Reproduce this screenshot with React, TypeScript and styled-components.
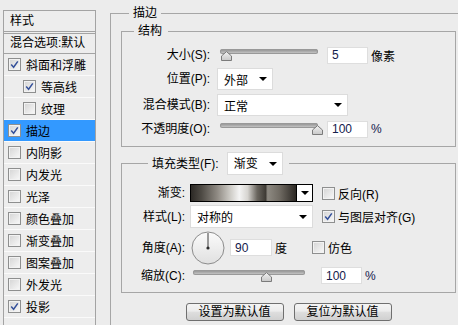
import React from "react";
import styled, { createGlobalStyle } from "styled-components";

const GlobalStyle = createGlobalStyle`
  html, body {
    margin: 0;
    padding: 0;
    background: #ececec;
  }
  body {
    font-family: "Liberation Sans", "Noto Sans CJK SC", sans-serif;
    font-size: 12px;
    color: #000;
    overflow: hidden;
  }
`;

const effects = [
  { label: "斜面和浮雕", checked: true },
  { label: "等高线", checked: true, indent: true },
  { label: "纹理", indent: true },
  { label: "描边", checked: true, active: true },
  { label: "内阴影" },
  { label: "内发光" },
  { label: "光泽" },
  { label: "颜色叠加" },
  { label: "渐变叠加" },
  { label: "图案叠加" },
  { label: "外发光" },
  { label: "投影", checked: true },
];

const Window = styled.div`
  display: flex;
  align-items: flex-start;
  width: 458px;
  height: 325px;
  overflow: hidden;
  background: #ececec;
`;

const Sidebar = styled.div`
  box-sizing: border-box;
  flex-shrink: 0;
  width: 93px;
  height: 330px;
  margin: 10px 0 0 3px;
  border: 1px solid #a3a3a3;
  background: #ededed;
`;

const SidebarHeader = styled.div`
  height: 20px;
  line-height: 20px;
  padding-left: 6px;
  border-bottom: 3px double #a3a3a3;
`;

const BlendRow = styled.div`
  height: 19px;
  line-height: 19px;
  padding-left: 6px;
  border-bottom: 1px solid #a3a3a3;
  white-space: nowrap;
`;

const EffectRow = styled.div<{ $active?: boolean; $indent?: boolean }>`
  display: flex;
  align-items: center;
  gap: 5px;
  height: 21px;
  padding-left: ${(p) => (p.$indent ? 19 : 4)}px;
  border-bottom: 1px solid #fafafa;
  background: ${(p) => (p.$active ? "#3399ff" : "transparent")};
  white-space: nowrap;
`;

const CheckFrame = styled.span`
  box-sizing: border-box;
  flex-shrink: 0;
  display: flex;
  align-items: center;
  justify-content: center;
  width: 13px;
  height: 13px;
  border: 1px solid #8e8f8f;
  background: linear-gradient(135deg, #d4d4d4, #f9f9f9);
  box-shadow: inset 0 0 0 1px #f2f2f2;
`;

function CheckBox({ checked }: { checked?: boolean }) {
  return (
    <CheckFrame>
      {checked && (
        <svg width="9" height="9" viewBox="0 0 9 9">
          <path d="M1.2 4.6 L3.6 7.2 L7.8 1.4" fill="none" stroke="#34509a" strokeWidth="1.5" />
        </svg>
      )}
    </CheckFrame>
  );
}

const Main = styled.div`
  flex-shrink: 0;
  margin: 5px 0 0 14px;
`;

const Group = styled.fieldset`
  box-sizing: border-box;
  width: 360px;
  height: 340px;
  min-width: 0;
  margin: 0;
  padding: 0 0 0 10px;
  border: 1px solid #a6a6a6;
`;

const GroupTitle = styled.legend`
  margin-left: 8px;
  padding: 0 4px;
  line-height: 16px;
`;

const Section = styled.fieldset`
  box-sizing: border-box;
  width: 335px;
  min-width: 0;
  margin: 2px 0 0;
  padding: 0;
  border: 1px solid #a6a6a6;

  & + & {
    margin-top: 5px;
  }
`;

const SectionTitle = styled.legend<{ $offset: number }>`
  margin-left: ${(p) => p.$offset}px;
  padding: 0 6px 0 4px;
  line-height: 16px;
`;

const LegendRow = styled.span`
  display: flex;
  align-items: center;
  gap: 8px;
`;

const StructureGrid = styled.div`
  display: grid;
  grid-template-columns: 88px 1fr;
  grid-template-rows: 18px 22px 22px 18px;
  column-gap: 7px;
  row-gap: 4px;
  align-items: center;
  padding: 7px 0 8px;
`;

const FillGrid = styled.div`
  display: grid;
  grid-template-columns: 63px 123px 1fr;
  grid-template-rows: 18px 23px 33px 17px;
  column-gap: 5px;
  row-gap: 3px;
  align-items: center;
  padding: 9px 0 8px;
`;

const Label = styled.span`
  text-align: right;
  white-space: nowrap;
  line-height: 16px;
`;

const Controls = styled.div<{ $span?: boolean }>`
  display: flex;
  align-items: center;
  height: 100%;
  grid-column: ${(p) => (p.$span ? "2 / 4" : "auto")};
`;

const SelectBox = styled.div<{ $w: number; $h?: number }>`
  box-sizing: border-box;
  display: flex;
  align-items: center;
  justify-content: space-between;
  width: ${(p) => p.$w}px;
  height: ${(p) => p.$h ?? 22}px;
  padding: 0 5px 0 6px;
  background: #fff;
  border: 1px solid #dcdcdc;
  white-space: nowrap;
`;

const Caret = styled.span`
  width: 0;
  height: 0;
  border-left: 4px solid transparent;
  border-right: 4px solid transparent;
  border-top: 4px solid #000;
`;

const NumberField = styled.input<{ $w: number; $gap: number }>`
  box-sizing: border-box;
  flex-shrink: 0;
  width: ${(p) => p.$w}px;
  height: 17px;
  margin: 0 3px 0 ${(p) => p.$gap}px;
  padding: 0 0 0 4px;
  background: #fff;
  border: 1px solid #dedede;
  outline: none;
  font-family: "Liberation Sans", sans-serif;
  font-size: 12px;
  color: #14204c;
`;

const Unit = styled.span<{ $latin?: boolean }>`
  white-space: nowrap;
  color: ${(p) => (p.$latin ? "#14204c" : "#000")};
`;

const SliderWrap = styled.div<{ $w: number }>`
  position: relative;
  flex-shrink: 0;
  width: ${(p) => p.$w}px;
  height: 16px;
  margin-left: 3px;
`;

const Track = styled.div`
  margin-top: 2px;
  height: 5px;
  border-radius: 3px;
  background: linear-gradient(#8a8a8a, #b4b4b4 60%, #d2d2d2);
  box-shadow: inset 0 0 0 1px #999;
`;

const Thumb = styled.svg`
  position: absolute;
  top: 4px;
`;

function Slider({ width, value, min, max }: { width: number; value: number; min: number; max: number }) {
  const left = -1 + ((value - min) / (max - min)) * (width - 5);
  return (
    <SliderWrap $w={width}>
      <Track />
      <Thumb width="11" height="10" viewBox="0 0 11 10" style={{ left }}>
        <defs>
          <linearGradient id={`tg${width}${value}`} x1="0" y1="0" x2="0" y2="1">
            <stop offset="0" stopColor="#f2f2f2" />
            <stop offset="1" stopColor="#c8c8c8" />
          </linearGradient>
        </defs>
        <path d="M0.5 9.5 V5 L5.5 0.6 L10.5 5 V9.5 Z" fill={`url(#tg${width}${value})`} stroke="#7b7b7b" />
      </Thumb>
    </SliderWrap>
  );
}

const GradientPicker = styled.div`
  box-sizing: border-box;
  display: flex;
  width: 123px;
  height: 18px;
  border: 1px solid #000;
  background: #fff;
`;

const GradientSwatch = styled.div`
  flex: 1;
  background: linear-gradient(
    90deg,
    #2c2925 0%,
    #4e4a44 10%,
    #8f8a83 25%,
    #d0cec9 38%,
    #f4f4f4 46%,
    #d6d4d0 54%,
    #6a665f 63%,
    #3f3b35 71%,
    #8e8a82 73%,
    #716c64 84%,
    #2c2824 100%
  );
`;

const GradientCaret = styled.div`
  display: flex;
  align-items: center;
  justify-content: center;
  width: 15px;
  border-left: 1px solid #000;
`;

const OptionCheck = styled.label<{ $gap: number }>`
  display: flex;
  align-items: center;
  gap: 3px;
  margin-left: ${(p) => p.$gap}px;
  white-space: nowrap;
`;

const Dial = styled.svg`
  flex-shrink: 0;
  margin-left: 1px;
`;

const ButtonRow = styled.div`
  display: flex;
  justify-content: center;
  gap: 10px;
  width: 335px;
  margin-top: 10px;
`;

const Button = styled.button`
  box-sizing: border-box;
  width: 98px;
  height: 18px;
  padding: 0;
  border: 1px solid #6f6f6f;
  border-radius: 3px;
  background: linear-gradient(#f4f4f4, #ececec 45%, #dedede 50%, #d0d0d0);
  font-family: "Liberation Sans", "Noto Sans CJK SC", sans-serif;
  font-size: 12px;
  line-height: 16px;
  color: #000;
`;

export default function App() {
  return (
    <>
      <GlobalStyle />
      <Window>
        <Sidebar>
          <SidebarHeader>样式</SidebarHeader>
          <BlendRow>混合选项:默认</BlendRow>
          {effects.map((e) => (
            <EffectRow key={e.label} $active={e.active} $indent={e.indent}>
              <CheckBox checked={e.checked} />
              {e.label}
            </EffectRow>
          ))}
        </Sidebar>
        <Main>
          <Group>
            <GroupTitle>描边</GroupTitle>
            <Section>
              <SectionTitle $offset={12}>结构</SectionTitle>
              <StructureGrid>
                <Label>大小(S):</Label>
                <Controls>
                  <Slider width={98} value={5} min={0} max={250} />
                  <NumberField $w={41} $gap={9} readOnly value="5" />
                  <Unit>像素</Unit>
                </Controls>
                <Label>位置(P):</Label>
                <Controls>
                  <SelectBox $w={56}>
                    外部
                    <Caret />
                  </SelectBox>
                </Controls>
                <Label>混合模式(B):</Label>
                <Controls>
                  <SelectBox $w={131}>
                    正常
                    <Caret />
                  </SelectBox>
                </Controls>
                <Label>不透明度(O):</Label>
                <Controls>
                  <Slider width={98} value={100} min={0} max={100} />
                  <NumberField $w={41} $gap={9} readOnly value="100" />
                  <Unit $latin>%</Unit>
                </Controls>
              </StructureGrid>
            </Section>
            <Section>
              <SectionTitle $offset={26}>
                <LegendRow>
                  <span>填充类型(F):</span>
                  <SelectBox $w={56} $h={23}>
                    渐变
                    <Caret />
                  </SelectBox>
                </LegendRow>
              </SectionTitle>
              <FillGrid>
                <Label>渐变:</Label>
                <GradientPicker>
                  <GradientSwatch />
                  <GradientCaret>
                    <Caret />
                  </GradientCaret>
                </GradientPicker>
                <OptionCheck $gap={4}>
                  <CheckBox />
                  反向(R)
                </OptionCheck>
                <Label>样式(L):</Label>
                <SelectBox $w={123} $h={23}>
                  对称的
                  <Caret />
                </SelectBox>
                <OptionCheck $gap={4}>
                  <CheckBox checked />
                  与图层对齐(G)
                </OptionCheck>
                <Label>角度(A):</Label>
                <Controls $span>
                  <Dial width="34" height="34" viewBox="0 0 34 34">
                    <defs>
                      <linearGradient id="dialFill" x1="0" y1="0" x2="0" y2="1">
                        <stop offset="0" stopColor="#fbfbfb" />
                        <stop offset="1" stopColor="#e0e0e0" />
                      </linearGradient>
                    </defs>
                    <circle cx="17" cy="17" r="16" fill="url(#dialFill)" stroke="#8c8c8c" />
                    <line x1="17" y1="17" x2="17" y2="2" stroke="#3c3c3c" strokeWidth="1" />
                    <circle cx="17" cy="17" r="1.6" fill="#2a2a2a" />
                  </Dial>
                  <NumberField $w={42} $gap={5} readOnly value="90" />
                  <Unit>度</Unit>
                  <OptionCheck $gap={25}>
                    <CheckBox />
                    仿色
                  </OptionCheck>
                </Controls>
                <Label>缩放(C):</Label>
                <Controls $span>
                  <Slider width={112} value={100} min={10} max={150} />
                  <NumberField $w={41} $gap={16} readOnly value="100" />
                  <Unit $latin>%</Unit>
                </Controls>
              </FillGrid>
            </Section>
            <ButtonRow>
              <Button>设置为默认值</Button>
              <Button>复位为默认值</Button>
            </ButtonRow>
          </Group>
        </Main>
      </Window>
    </>
  );
}
